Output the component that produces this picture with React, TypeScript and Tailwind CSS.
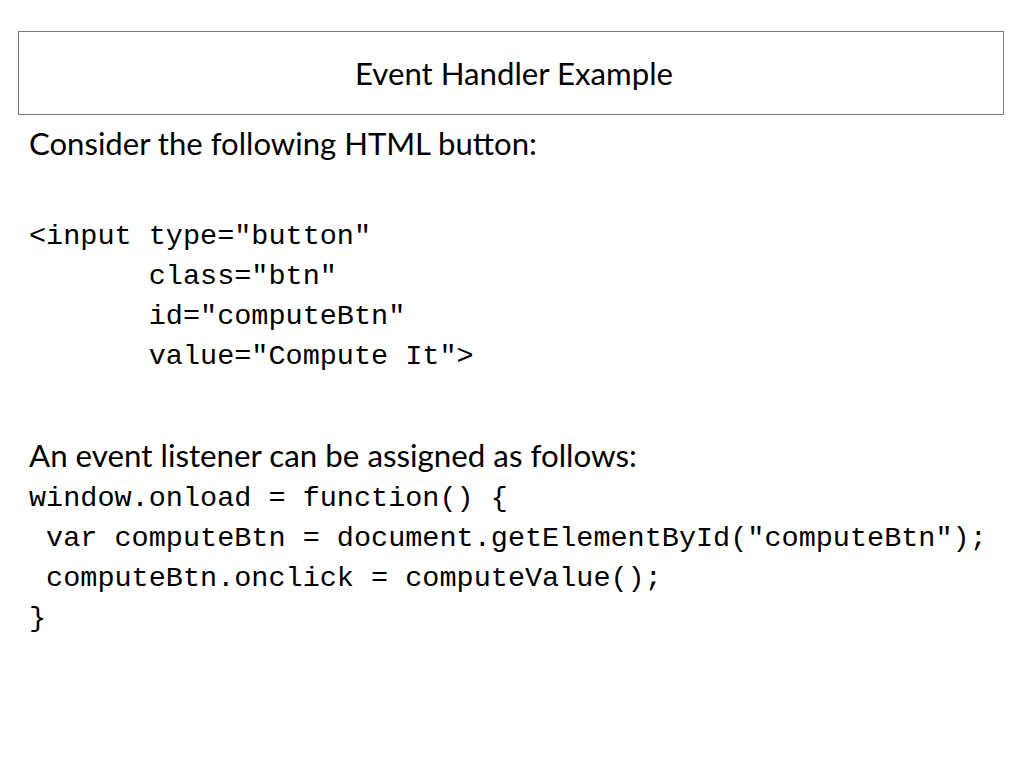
import React from 'react';

const codeBlock1 = [
  '<input type="button"',
  '       class="btn"',
  '       id="computeBtn"',
  '       value="Compute It">',
];

const codeBlock2 = [
  'window.onload = function() {',
  ' var computeBtn = document.getElementById("computeBtn");',
  ' computeBtn.onclick = computeValue();',
  '}',
];

const CodeLines: React.FC<{ lines: string[] }> = ({ lines }) => (
  <div className="font-['Liberation_Mono',monospace] text-[28.5px] leading-[40px] whitespace-pre">
    {lines.map((line, i) => (
      <div key={i}>{line}</div>
    ))}
  </div>
);

const App: React.FC = () => {
  return (
    <div className="w-[1024px] h-[768px] bg-white text-black overflow-hidden font-['Lato',sans-serif]">
      <div className="pt-[31px] pl-[18px]">
        <div className="w-[986px] h-[84px] border border-[#7a7a7a] flex items-center justify-center">
          <h1 className="text-[31.2px] pl-[6px]">Event Handler Example</h1>
        </div>
      </div>

      <div className="pl-[29px]">
        <p className="mt-[8px] text-[31.1px] leading-[40px]">Consider the following HTML button:</p>
        <div className="mt-[54px]">
          <CodeLines lines={codeBlock1} />
        </div>
        <p className="mt-[58px] text-[31.3px] leading-[40px]">An event listener can be assigned as follows:</p>
        <div className="mt-[4px]">
          <CodeLines lines={codeBlock2} />
        </div>
      </div>
    </div>
  );
};

export default App;
